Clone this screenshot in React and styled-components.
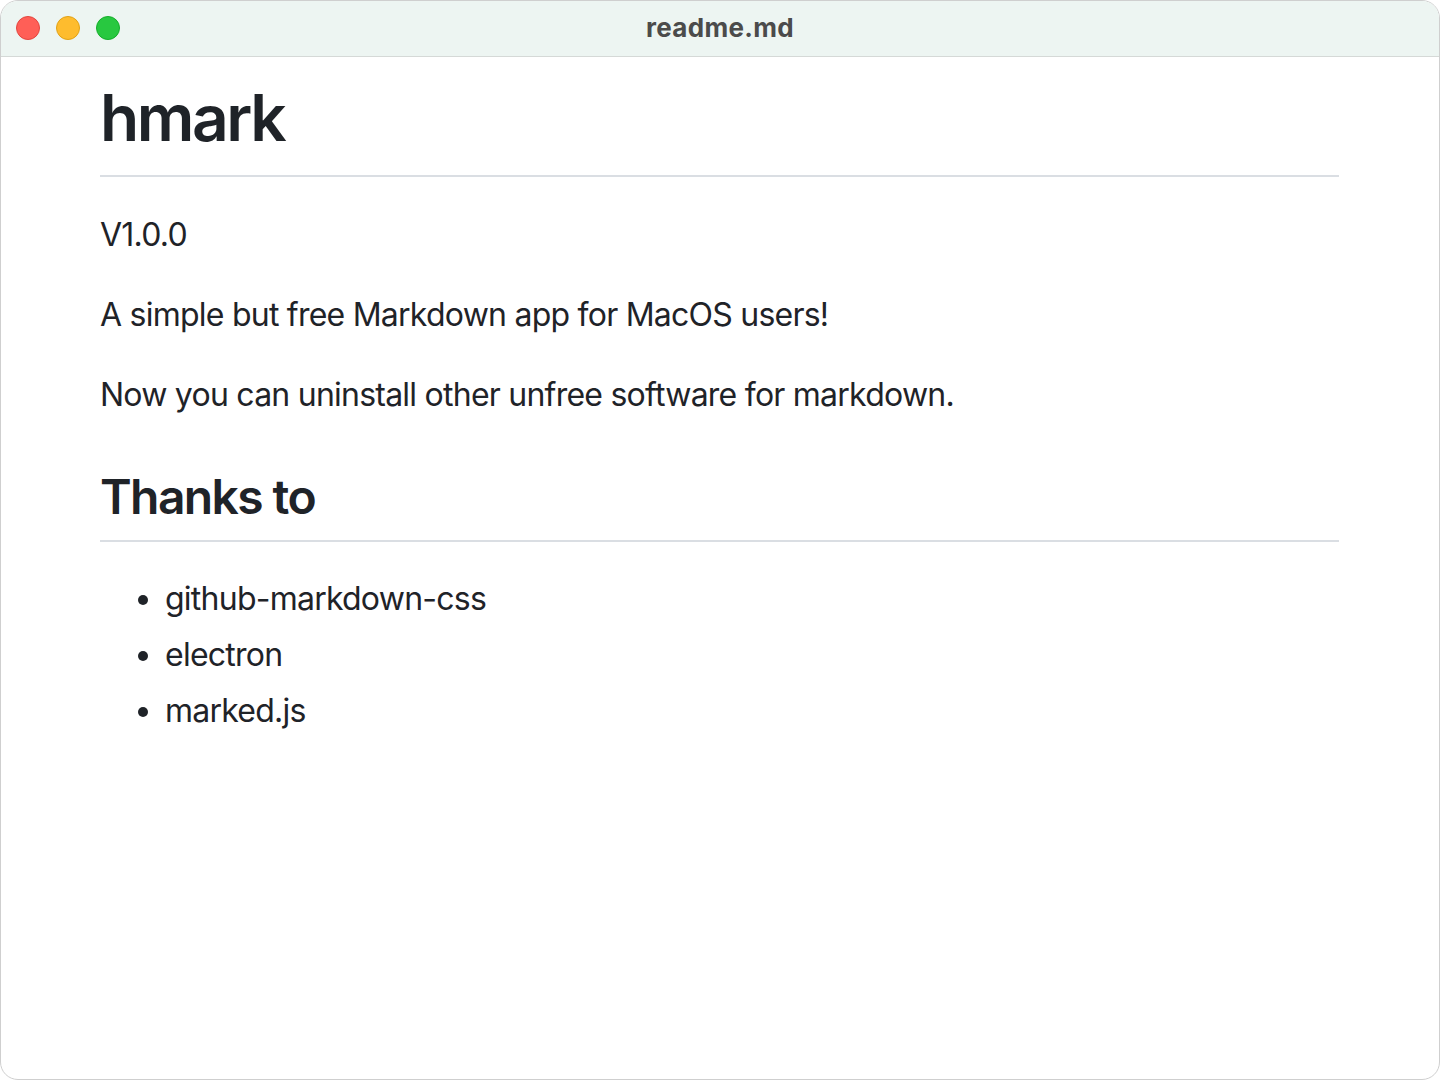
import styled, { createGlobalStyle } from "styled-components"

const GlobalStyle = createGlobalStyle`
  html, body {
    margin: 0;
    padding: 0;
    background: #fff;
  }
  * {
    box-sizing: border-box;
  }
`

const Window = styled.div`
  width: 1440px;
  height: 1080px;
  display: flex;
  flex-direction: column;
  background: #fff;
  border: 1px solid #cfcfcf;
  border-radius: 18px;
  overflow: hidden;
`

const TitleBar = styled.div`
  height: 56px;
  flex-shrink: 0;
  display: grid;
  grid-template-columns: 1fr auto 1fr;
  align-items: center;
  padding: 0 15px 1px;
  background: #edf5f2;
  border-bottom: 1px solid #d5d9d7;
`

const Lights = styled.div`
  display: flex;
  gap: 16px;
`

const Light = styled.span`
  width: 24px;
  height: 24px;
  border-radius: 50%;
  background: ${(p) => p.color};
  border: 1px solid ${(p) => p.edge};
`

const WindowTitle = styled.div`
  font-family: Inter, "Liberation Sans", sans-serif;
  font-size: 26px;
  font-weight: 700;
  color: #4b4b4b;
  letter-spacing: 0.3px;
  padding-bottom: 1px;
`

const Body = styled.main`
  flex: 1;
  padding: 21px 100px 0 99px;
  font-family: Inter, "Liberation Sans", sans-serif;
  font-size: 32px;
  line-height: 1.5;
  color: #1f2328;
  letter-spacing: -0.76px;
`

const H1 = styled.h1`
  margin: 0 0 34px;
  padding-bottom: 17px;
  font-size: 64px;
  font-weight: 600;
  line-height: 1.25;
  letter-spacing: -2.4px;
  border-bottom: 2px solid #dadee3;
`

const H2 = styled.h2`
  margin: 48px 0 33px;
  padding-bottom: 13px;
  font-size: 48px;
  font-weight: 600;
  line-height: 1.25;
  letter-spacing: -1.6px;
  border-bottom: 2px solid #dadee3;
`

const P = styled.p`
  margin: 0 0 32px;
`

const List = styled.ul`
  margin: 0;
  padding-left: 65px;
`

const Item = styled.li`
  & + & {
    margin-top: 8px;
  }
`

export default function App() {
  return (
    <>
      <GlobalStyle />
      <Window>
        <TitleBar>
          <Lights>
            <Light color="#ff5f57" edge="#e2463f" />
            <Light color="#febc2e" edge="#e1a116" />
            <Light color="#28c840" edge="#14ae2a" />
          </Lights>
          <WindowTitle>readme.md</WindowTitle>
          <span />
        </TitleBar>
        <Body>
          <H1>hmark</H1>
          <P>V1.0.0</P>
          <P>A simple but free Markdown app for MacOS users!</P>
          <P>Now you can uninstall other unfree software for markdown.</P>
          <H2>Thanks to</H2>
          <List>
            <Item>github-markdown-css</Item>
            <Item>electron</Item>
            <Item>marked.js</Item>
          </List>
        </Body>
      </Window>
    </>
  )
}
